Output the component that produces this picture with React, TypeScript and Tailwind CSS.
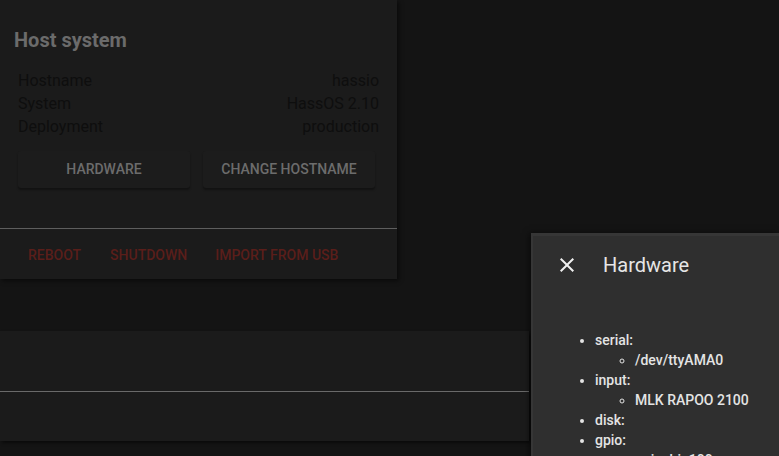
import React from 'react';

const rows = [
    { label: 'Hostname', value: 'hassio' },
    { label: 'System', value: 'HassOS 2.10' },
    { label: 'Deployment', value: 'production' },
];

const hardware = [
    { name: 'serial', items: ['/dev/ttyAMA0'] },
    { name: 'input', items: ['MLK RAPOO 2100'] },
    { name: 'disk', items: [] as string[] },
    { name: 'gpio', items: ['gpiochip100'] },
];

const App: React.FC = () => {
    return (
        <div
            className="relative w-[779px] h-[456px] overflow-hidden bg-[#141414]"
            style={{ fontFamily: 'Roboto, "Liberation Sans", sans-serif' }}
        >
            {/* host system card, dimmed by the drawer scrim */}
            <div className="w-[397px] bg-[#1b1b1b] shadow-[2px_2px_4px_rgba(0,0,0,0.5)]">
                <div className="px-[14px] pt-[26px]">
                    <h2 className="text-[20px] leading-[28px] font-bold text-[#6b6b6b]">Host system</h2>
                    <div className="mt-[15px] pl-[4px] pr-[4px]">
                        {rows.map((r) => (
                            <div key={r.label} className="flex justify-between text-[16px] leading-[23px] text-[#0e0e0e]">
                                <span>{r.label}</span>
                                <span>{r.value}</span>
                            </div>
                        ))}
                    </div>
                    <div className="flex gap-[13px] pl-[4px] mt-[13px]">
                        <button className="w-[172px] h-[37px] bg-[#1c1c1c] rounded-[3px] shadow-[0_2px_2px_rgba(0,0,0,0.35)] text-[14px] font-medium uppercase text-[#6c6c6c]">
                            Hardware
                        </button>
                        <button className="w-[172px] h-[37px] bg-[#1c1c1c] rounded-[3px] shadow-[0_2px_2px_rgba(0,0,0,0.35)] text-[14px] font-medium uppercase text-[#6c6c6c]">
                            Change hostname
                        </button>
                    </div>
                </div>
                <div className="mt-[40px] border-t border-[#5e5e5e]" />
                <div className="flex pl-[28px] h-[50px] pt-[2px] items-center text-[14px] font-medium uppercase text-[#5a1e1a]">
                    <span>Reboot</span>
                    <span className="ml-[29px]">Shutdown</span>
                    <span className="ml-[28px]">Import from USB</span>
                </div>
            </div>

            {/* second card */}
            <div className="mt-[52px] w-[529px] bg-[#1b1b1b] shadow-[2px_2px_3px_rgba(0,0,0,0.5)]">
                <div className="h-[60px]" />
                <div className="border-t border-[#6a6a6a]" />
                <div className="h-[49px]" />
            </div>

            {/* hardware drawer */}
            <div className="absolute left-[531px] top-[233px] w-[248px] h-[240px] bg-[#2f2f2f] border-t-[3px] border-l-[2px] border-[#363636] shadow-[-2px_0_6px_rgba(0,0,0,0.5)] text-[#e4e4e4]">
                <div className="flex items-center h-[58px] pl-[22px]">
                    <svg width="24" height="24" viewBox="0 0 24 24" className="shrink-0">
                        <path
                            fill="#f0f0f0"
                            d="M19,6.41L17.59,5L12,10.59L6.41,5L5,6.41L10.59,12L5,17.59L6.41,19L12,13.41L17.59,19L19,17.59L13.41,12L19,6.41Z"
                        />
                    </svg>
                    <span className="ml-[24px] text-[20px] text-[#e6e6e6]">Hardware</span>
                </div>
                <ul className="list-disc ml-[22px] pl-[40px] mt-[36px] text-[14px] leading-[20px] font-medium">
                    {hardware.map((h) => (
                        <li key={h.name}>
                            {h.name}:
                            {h.items.length > 0 && (
                                <ul className="list-[circle] pl-[40px]">
                                    {h.items.map((it) => (
                                        <li key={it}>{it}</li>
                                    ))}
                                </ul>
                            )}
                        </li>
                    ))}
                </ul>
            </div>
        </div>
    );
};

export default App;
